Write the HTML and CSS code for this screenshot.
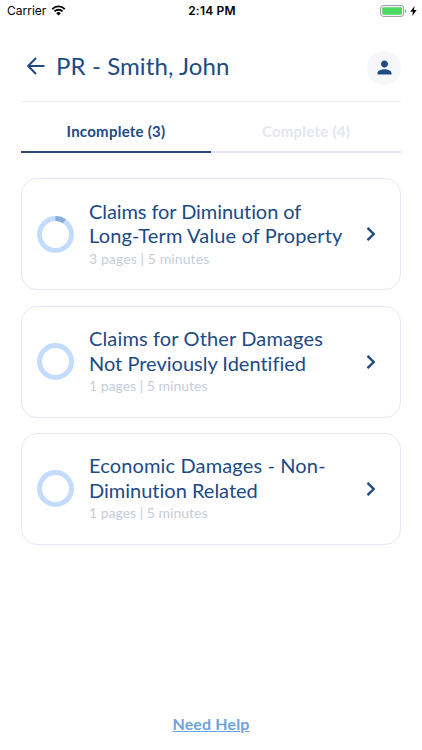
FILE: index.html
```html
<!DOCTYPE html>
<html lang="en">
<head>
    <meta charset="UTF-8">
    <meta name="viewport" content="width=device-width, initial-scale=1">
    <title>PR - Smith, John</title>
    <link rel="stylesheet" href="styles.css">
</head>
<body>
    <div class="status-bar">
        <div class="carrier">
            <span>Carrier</span>
            <svg class="wifi" viewBox="0 0 16 12">
                <path d="M1.2 4.4a9.6 9.6 0 0 1 13.6 0M3.6 7a6.2 6.2 0 0 1 8.8 0" fill="none" stroke="#000" stroke-width="2"/>
                <path d="M5.5 8.9a3.6 3.6 0 0 1 5 0L8 11.5z"/>
            </svg>
        </div>
        <div class="time">2:14 PM</div>
        <div class="battery">
            <svg class="battery-icon" viewBox="0 0 27 12">
                <rect x=".6" y=".6" width="23" height="10.8" rx="2.6" fill="none" stroke="#999" stroke-width="1"/>
                <rect x="2.2" y="2.2" width="19.8" height="7.6" rx="1" fill="#4cd964"/>
                <path d="M25 4v4a2.2 2.2 0 0 0 0-4z" fill="#999"/>
            </svg>
            <svg class="bolt" viewBox="0 0 7 10">
                <path d="M4.5 0L.3 5.7h2.6L2.3 10 6.7 4.1H4z"/>
            </svg>
        </div>
    </div>

    <header class="header">
        <svg class="back" viewBox="0 0 18 18" fill="none" stroke="currentColor" stroke-width="2">
            <path d="M17.5 9H1.5M9 1L1.2 9 9 17"/>
        </svg>
        <h1>PR - Smith, John</h1>
        <div class="avatar">
            <svg viewBox="0 0 24 24" fill="currentColor">
                <path d="M12 12c2.21 0 4-1.79 4-4s-1.79-4-4-4-4 1.79-4 4 1.79 4 4 4zm0 2c-2.67 0-8 1.34-8 4v2h16v-2c0-2.66-5.33-4-8-4z"/>
            </svg>
        </div>
    </header>

    <nav class="tabs">
        <div class="tab active">Incomplete (3)</div>
        <div class="tab">Complete (4)</div>
    </nav>

    <main class="cards">
        <div class="card">
            <svg class="progress" viewBox="0 0 37 37" fill="none" stroke-width="5">
                <circle cx="18.5" cy="18.5" r="16" stroke="#c3dcfd"/>
                <path d="M18.5 2.5a16 16 0 0 1 9 2.8" stroke="#86ade0"/>
            </svg>
            <div class="card-text">
                <h2><span class="tight">Claims for Diminution of</span><br><span class="wide">Long-Term Value of Property</span></h2>
                <p>3 pages | 5 minutes</p>
            </div>
            <svg class="chevron" viewBox="0 0 10 16" fill="none" stroke="currentColor" stroke-width="2.4">
                <path d="M1.5 1.8L7.7 8l-6.2 6.2"/>
            </svg>
        </div>
        <div class="card">
            <svg class="progress" viewBox="0 0 37 37" fill="none" stroke-width="5">
                <circle cx="18.5" cy="18.5" r="16" stroke="#c3dcfd"/>
            </svg>
            <div class="card-text">
                <h2><span class="wide">Claims for Other Damages</span><br>Not Previously Identified</h2>
                <p class="tight">1 pages | 5 minutes</p>
            </div>
            <svg class="chevron" viewBox="0 0 10 16" fill="none" stroke="currentColor" stroke-width="2.4">
                <path d="M1.5 1.8L7.7 8l-6.2 6.2"/>
            </svg>
        </div>
        <div class="card">
            <svg class="progress" viewBox="0 0 37 37" fill="none" stroke-width="5">
                <circle cx="18.5" cy="18.5" r="16" stroke="#c3dcfd"/>
            </svg>
            <div class="card-text">
                <h2><span class="wide">Economic Damages - Non-</span><br>Diminution Related</h2>
                <p class="tight">1 pages | 5 minutes</p>
            </div>
            <svg class="chevron" viewBox="0 0 10 16" fill="none" stroke="currentColor" stroke-width="2.4">
                <path d="M1.5 1.8L7.7 8l-6.2 6.2"/>
            </svg>
        </div>
    </main>

    <footer class="footer">
        <a href="#">Need Help</a>
    </footer>
</body>
</html>
```
FILE: styles.css
```css
* {
    box-sizing: border-box;
}

body {
    display: flex;
    flex-direction: column;
    height: 750px;
    margin: 0;
    background-color: #fff;
    color: #204a84;
    font-family: Lato, "Open Sans", sans-serif;
    font-variant-ligatures: none;
}

svg {
    display: block;
    flex: none;
}

h1, h2, p {
    margin: 0;
    font-weight: 400;
    white-space: nowrap;
}

/* Status bar */
.status-bar {
    display: grid;
    grid-template-columns: 1fr auto 1fr;
    align-items: center;
    height: 22px;
    padding: 0 5px 0 7px;
    color: #000;
    font-family: Inter, sans-serif;
    font-size: 12px;
}

.carrier {
    display: flex;
    align-items: center;
    gap: 5px;
    margin-top: -1px;
}

.wifi {
    width: 15px;
    height: 11px;
}

.time {
    margin-top: -1px;
    font-weight: 600;
    letter-spacing: 0.2px;
}

.battery {
    display: flex;
    align-items: center;
    justify-content: flex-end;
    gap: 3px;
    margin-top: -1px;
}

.battery-icon {
    width: 27px;
    height: 12px;
}

.bolt {
    width: 7px;
    height: 10px;
}

/* Header */
.header {
    display: flex;
    align-items: center;
    height: 80px;
    margin: 0 21px;
    padding: 12px 0 0 6px;
    border-bottom: 1px solid #e9ebfa;
}

.back {
    width: 18px;
    height: 18px;
    margin-top: -3px;
}

.header h1 {
    margin: -3px 0 0 11px;
    font-size: 24px;
    letter-spacing: 0.1px;
    line-height: 30px;
}

.avatar {
    display: flex;
    align-items: center;
    justify-content: center;
    width: 34px;
    height: 34px;
    margin-left: auto;
    border-radius: 50%;
    background-color: #f5f7fa;
}

.avatar svg {
    width: 21px;
    height: 21px;
}

/* Tabs */
.tabs {
    display: grid;
    grid-template-columns: 1fr 1fr;
    height: 51px;
    margin: 0 21px;
    font-size: 15px;
    font-weight: 700;
    letter-spacing: 0.25px;
}

.tab {
    padding-top: 19px;
    border-bottom: 2px solid #e2e7ef;
    color: #e2e7ef;
    line-height: 20px;
    text-align: center;
}

.tab.active {
    border-color: #26497c;
    color: #204a84;
}

/* Cards */
.cards {
    display: flex;
    flex-direction: column;
    gap: 15.3px;
    margin: 25.4px 21px 0;
}

.card {
    display: flex;
    align-items: center;
    height: 112px;
    padding: 0 24px 0 15px;
    border: 1px solid #e6e7fb;
    border-radius: 16px;
}

.progress {
    width: 37px;
    height: 37px;
}

.card-text {
    flex: 1;
    margin: -1px 0 0 15px;
}

.card h2 {
    font-size: 20px;
    line-height: 24.5px;
}

.card h2 .tight {
    letter-spacing: -0.08px;
}

.card h2 .wide {
    letter-spacing: 0.14px;
}

.card p {
    padding-top: 1px;
    color: #c5cddb;
    font-size: 14px;
    letter-spacing: 0.1px;
    line-height: 20px;
}

.card p.tight {
    letter-spacing: 0;
}

.chevron {
    width: 10px;
    height: 16px;
}

/* Footer */
.footer {
    margin-top: auto;
    padding-bottom: 16px;
    font-size: 16px;
    font-weight: 700;
    letter-spacing: 0.15px;
    line-height: 20px;
    text-align: center;
}

.footer a {
    color: #6ea3e0;
}
```
